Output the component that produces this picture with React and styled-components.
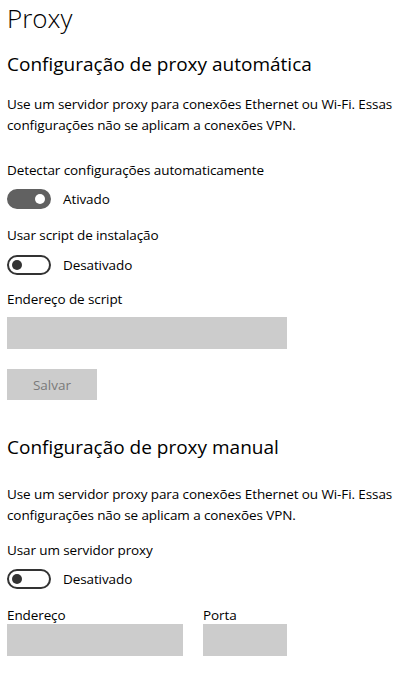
import React from "react";
import styled, { createGlobalStyle } from "styled-components";

const GlobalStyle = createGlobalStyle`
  html, body {
    margin: 0;
    padding: 0;
    background: #ffffff;
  }
  body {
    font-family: "Open Sans", "Noto Sans", sans-serif;
    color: #000000;
  }
`;

const Page = styled.div`
  box-sizing: border-box;
  width: 410px;
  padding: 0 7px 20px 7px;
`;

const Title = styled.h1`
  margin: 0;
  font-size: 26px;
  font-weight: 300;
  line-height: 36px;
`;

const Section = styled.h2`
  margin: ${(p) => p.$top}px 0 0 0;
  font-size: 19px;
  font-weight: 400;
  line-height: 28px;
`;

const Text = styled.p`
  margin: ${(p) => p.$top}px 0 0 0;
  width: 396px;
  font-size: 13.5px;
  line-height: 21px;
  letter-spacing: -0.1px;
`;

const Label = styled.div`
  margin-top: ${(p) => p.$top}px;
  font-size: 13.5px;
  line-height: 21px;
  letter-spacing: -0.1px;
`;

const ToggleRow = styled.div`
  display: flex;
  align-items: center;
  gap: 12px;
  height: 20px;
  margin-top: ${(p) => p.$top}px;
  font-size: 13.5px;
  letter-spacing: -0.1px;
`;

const Track = styled.div`
  box-sizing: border-box;
  position: relative;
  width: 44px;
  height: 20px;
  border-radius: 10px;
  background: ${(p) => (p.$on ? "#616161" : "#ffffff")};
  border: 2px solid ${(p) => (p.$on ? "#616161" : "#333333")};
`;

const Knob = styled.span`
  position: absolute;
  top: 3px;
  left: ${(p) => (p.$on ? "26px" : "3px")};
  width: 10px;
  height: 10px;
  border-radius: 50%;
  background: ${(p) => (p.$on ? "#ffffff" : "#333333")};
`;

const Input = styled.div`
  width: ${(p) => p.$width}px;
  height: 32px;
  margin-top: ${(p) => p.$top || 0}px;
  background: #cccccc;
`;

const Button = styled.button`
  display: block;
  width: 90px;
  height: 31px;
  margin-top: 20px;
  padding: 0;
  border: none;
  background: #cccccc;
  color: #7a7a7a;
  font-family: inherit;
  font-size: 13.5px;
`;

const Fields = styled.div`
  display: flex;
  gap: 20px;
  margin-top: 17px;
`;

const Field = styled.div`
  display: flex;
  flex-direction: column;
`;

const FieldLabel = styled.div`
  font-size: 13.5px;
  line-height: 18px;
  letter-spacing: -0.1px;
`;

function Toggle({ on, top }) {
  return (
    <ToggleRow $top={top}>
      <Track $on={on}>
        <Knob $on={on} />
      </Track>
      <span>{on ? "Ativado" : "Desativado"}</span>
    </ToggleRow>
  );
}

const desc =
  "Use um servidor proxy para conexões Ethernet ou Wi-Fi. Essas configurações não se aplicam a conexões VPN.";

export default function App() {
  return (
    <Page>
      <GlobalStyle />
      <Title>Proxy</Title>

      <Section $top={14}>Configuração de proxy automática</Section>
      <Text $top={16}>{desc}</Text>
      <Label $top={24}>Detectar configurações automaticamente</Label>
      <Toggle on top={8} />
      <Label $top={16}>Usar script de instalação</Label>
      <Toggle top={9} />
      <Label $top={14}>Endereço de script</Label>
      <Input $width={280} $top={7} />
      <Button>Salvar</Button>

      <Section $top={33}>Configuração de proxy manual</Section>
      <Text $top={23}>{desc}</Text>
      <Label $top={14}>Usar um servidor proxy</Label>
      <Toggle top={8} />
      <Fields>
        <Field>
          <FieldLabel>Endereço</FieldLabel>
          <Input $width={176} />
        </Field>
        <Field>
          <FieldLabel>Porta</FieldLabel>
          <Input $width={84} />
        </Field>
      </Fields>
    </Page>
  );
}
